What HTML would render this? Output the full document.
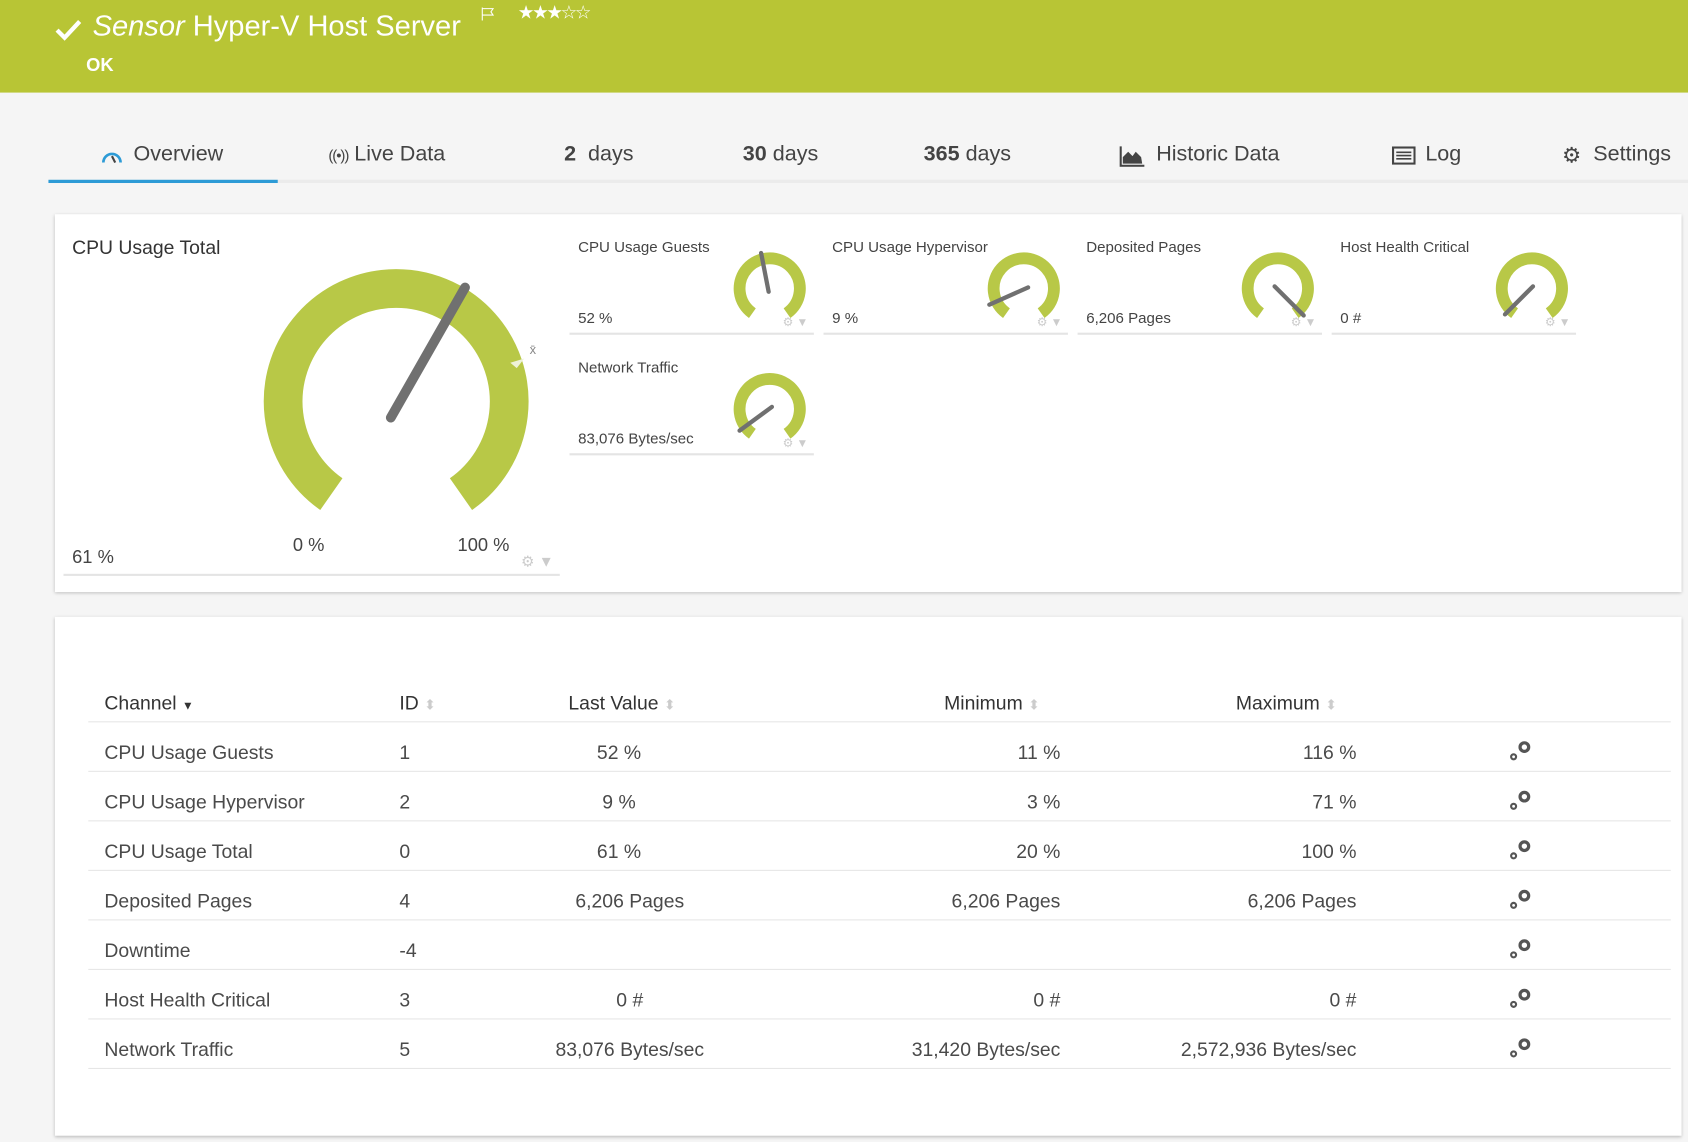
<!DOCTYPE html>
<html><head><meta charset="utf-8"><style>
html,body{margin:0;padding:0;width:1688px;height:1142px;overflow:hidden;background:#f5f5f5;font-family:"Liberation Sans",sans-serif;}
#w{position:absolute;left:0;top:0;width:1568px;height:1061px;transform:scale(1.07653);transform-origin:0 0;}
.a{position:absolute;white-space:nowrap;}
.hdr{position:absolute;left:0;top:0;width:1568px;height:86px;background:#b8c535;}
.tab{position:absolute;top:132px;font-size:20px;color:#444;}
.panel{position:absolute;background:#fff;box-shadow:0 1px 3px rgba(0,0,0,.25);}
.st{font-size:14px;color:#444;}
.sv{font-size:14px;color:#444;}
.ln{position:absolute;height:2px;background:#e4e4e4;}
.td{position:absolute;font-size:18px;color:#4a4a4a;}
.hl{position:absolute;left:82px;width:1470px;height:1px;background:#e6e6e6;}
.th{position:absolute;top:643px;font-size:18px;color:#333;}
.srt{display:inline-block;vertical-align:middle;margin-left:6px;}
</style></head><body><div id="w">
<div class="hdr"></div>
<svg class="a" style="left:50px;top:16px" width="28" height="24"><path d="M3 12 L10 19 L24 4" stroke="#fff" stroke-width="4" fill="none"/></svg>
<div class="a" style="left:86px;top:9px;font-size:27px;color:#fff;"><i>Sensor</i> Hyper-V Host Server</div>
<svg class="a" style="left:446px;top:6px" width="16" height="14"><path d="M2 1 V13 M2 2 H12 L10 5 L12 8 H2" stroke="#fff" stroke-width="1" fill="none"/></svg>
<div class="a" style="left:481px;top:2px;font-size:17px;color:#fff;letter-spacing:-2px;">★★★☆☆</div>
<div class="a" style="left:80px;top:51px;font-size:17px;color:#fff;font-weight:bold;">OK</div>

<div class="a" style="left:45px;top:167px;width:1523px;height:3px;background:#ebebeb"></div>
<div class="a" style="left:45px;top:167px;width:213px;height:3px;background:#2d9bd6"></div>
<svg class="a" style="left:93px;top:136px" width="22" height="18"><path d="M3 15 A8 8 0 1 1 19 15" stroke="#2d9bd6" stroke-width="2.5" fill="none"/><path d="M11 9 L14 15" stroke="#444" stroke-width="2"/></svg>
<div class="tab" style="left:124px;">Overview</div>
<div class="tab" style="left:305px;"><span style="font-size:14px;letter-spacing:-1px">((•))</span> Live Data</div>
<div class="tab" style="left:524px;"><b>2</b>&nbsp; days</div>
<div class="tab" style="left:690px;"><b>30</b> days</div>
<div class="tab" style="left:858px;"><b>365</b> days</div>
<svg class="a" style="left:1040px;top:135px" width="24" height="20"><path d="M1 1 V19 H23" stroke="#444" stroke-width="2" fill="none"/><path d="M3 17 L3 11 L8 6 L12 10 L15 6 L20 11 L21 17 Z" fill="#444"/></svg>
<div class="tab" style="left:1074px;">Historic Data</div>
<svg class="a" style="left:1293px;top:136px" width="22" height="17"><rect x="1" y="1" width="20" height="15" fill="none" stroke="#444" stroke-width="2"/><path d="M4 5.5H18M4 8.5H18M4 11.5H18" stroke="#444" stroke-width="1.5"/></svg>
<div class="tab" style="left:1324px;">Log</div>
<div class="tab" style="left:1451px;font-size:20px">⚙</div>
<div class="tab" style="left:1480px;">Settings</div>

<div class="panel" style="left:51px;top:199px;width:1511px;height:351px;"></div>
<div class="a" style="left:67px;top:220px;font-size:18px;color:#333;">CPU Usage Total</div>
<svg class="a" style="left:0;top:0" width="1568" height="560">
<path d="M307.8 459 A105 105 0 1 1 428.2 459" stroke="#b8c847" stroke-width="36" fill="none"/>
<path d="M474 337 L487 333 L480 342 Z" fill="#eef2d8"/>
<line x1="363" y1="388" x2="432" y2="267" stroke="#707070" stroke-width="9" stroke-linecap="round"/>
<g fill="none" stroke="#b8c847" stroke-width="11">
<path d="M698.9 290.9 A28 28 0 1 1 731.1 290.9"/>
<path d="M934.9 290.9 A28 28 0 1 1 967.1 290.9"/>
<path d="M1170.9 290.9 A28 28 0 1 1 1203.1 290.9"/>
<path d="M1406.9 290.9 A28 28 0 1 1 1439.1 290.9"/>
<path d="M698.9 402.9 A28 28 0 1 1 731.1 402.9"/>
</g>
<g stroke="#707070" stroke-width="4" stroke-linecap="round">
<line x1="707" y1="235" x2="714" y2="271"/>
<line x1="919" y1="283" x2="955" y2="267"/>
<line x1="1184" y1="266" x2="1211" y2="293"/>
<line x1="1398" y1="292" x2="1424" y2="266"/>
<line x1="687" y1="400" x2="717" y2="378"/>
</g>
</svg>
<div class="a" style="left:492px;top:318px;font-size:12px;color:#888">x̄</div>
<div class="a" style="left:272px;top:497px;font-size:17px;color:#444">0 %</div>
<div class="a" style="left:425px;top:497px;font-size:17px;color:#444">100 %</div>
<div class="a" style="left:67px;top:508px;font-size:17px;color:#444">61 %</div>
<div class="ln" style="left:59px;top:533px;width:461px"></div>
<div class="a" style="left:484px;top:513px;font-size:14px;color:#ccc">⚙ ▼</div>

<div class="a st" style="left:537px;top:221px">CPU Usage Guests</div><div class="a sv" style="left:537px;top:287px">52 %</div><div class="ln" style="left:529px;top:309px;width:227px"></div><div class="a" style="left:727px;top:293px;font-size:11px;color:#ccc">⚙ ▼</div>
<div class="a st" style="left:773px;top:221px">CPU Usage Hypervisor</div><div class="a sv" style="left:773px;top:287px">9 %</div><div class="ln" style="left:765px;top:309px;width:227px"></div><div class="a" style="left:963px;top:293px;font-size:11px;color:#ccc">⚙ ▼</div>
<div class="a st" style="left:1009px;top:221px">Deposited Pages</div><div class="a sv" style="left:1009px;top:287px">6,206 Pages</div><div class="ln" style="left:1001px;top:309px;width:227px"></div><div class="a" style="left:1199px;top:293px;font-size:11px;color:#ccc">⚙ ▼</div>
<div class="a st" style="left:1245px;top:221px">Host Health Critical</div><div class="a sv" style="left:1245px;top:287px">0 #</div><div class="ln" style="left:1237px;top:309px;width:227px"></div><div class="a" style="left:1435px;top:293px;font-size:11px;color:#ccc">⚙ ▼</div>
<div class="a st" style="left:537px;top:333px">Network Traffic</div><div class="a sv" style="left:537px;top:399px">83,076 Bytes/sec</div><div class="ln" style="left:529px;top:421px;width:227px"></div><div class="a" style="left:727px;top:405px;font-size:11px;color:#ccc">⚙ ▼</div>

<div class="panel" style="left:51px;top:573px;width:1511px;height:482px;"></div>
<div class="th" style="left:97px">Channel <span style="font-size:11px">▼</span></div>
<div class="th" style="left:371px">ID <span style="color:#ccc;font-size:13px">⬍</span></div>
<div class="th" style="left:528px">Last Value <span style="color:#ccc;font-size:13px">⬍</span></div>
<div class="th" style="left:877px">Minimum <span style="color:#ccc;font-size:13px">⬍</span></div>
<div class="th" style="left:1148px">Maximum <span style="color:#ccc;font-size:13px">⬍</span></div>
<div class="hl" style="top:670px"></div><div class="hl" style="top:716px"></div><div class="hl" style="top:762px"></div><div class="hl" style="top:808px"></div><div class="hl" style="top:854px"></div><div class="hl" style="top:900px"></div><div class="hl" style="top:946px"></div><div class="hl" style="top:992px"></div>

<div id="rows"></div>
<div class="td" style="left:97px;top:689px">CPU Usage Guests</div><div class="td" style="left:371px;top:689px">1</div><div class="td" style="left:475px;width:200px;text-align:center;top:689px">52 %</div><div class="td" style="left:685px;width:300px;text-align:right;top:689px">11 %</div><div class="td" style="left:960px;width:300px;text-align:right;top:689px">116 %</div>
<div class="td" style="left:97px;top:735px">CPU Usage Hypervisor</div><div class="td" style="left:371px;top:735px">2</div><div class="td" style="left:475px;width:200px;text-align:center;top:735px">9 %</div><div class="td" style="left:685px;width:300px;text-align:right;top:735px">3 %</div><div class="td" style="left:960px;width:300px;text-align:right;top:735px">71 %</div>
<div class="td" style="left:97px;top:781px">CPU Usage Total</div><div class="td" style="left:371px;top:781px">0</div><div class="td" style="left:475px;width:200px;text-align:center;top:781px">61 %</div><div class="td" style="left:685px;width:300px;text-align:right;top:781px">20 %</div><div class="td" style="left:960px;width:300px;text-align:right;top:781px">100 %</div>
<div class="td" style="left:97px;top:827px">Deposited Pages</div><div class="td" style="left:371px;top:827px">4</div><div class="td" style="left:475px;width:220px;text-align:center;top:827px">6,206 Pages</div><div class="td" style="left:685px;width:300px;text-align:right;top:827px">6,206 Pages</div><div class="td" style="left:960px;width:300px;text-align:right;top:827px">6,206 Pages</div>
<div class="td" style="left:97px;top:873px">Downtime</div><div class="td" style="left:371px;top:873px">-4</div>
<div class="td" style="left:97px;top:919px">Host Health Critical</div><div class="td" style="left:371px;top:919px">3</div><div class="td" style="left:475px;width:220px;text-align:center;top:919px">0 #</div><div class="td" style="left:685px;width:300px;text-align:right;top:919px">0 #</div><div class="td" style="left:960px;width:300px;text-align:right;top:919px">0 #</div>
<div class="td" style="left:97px;top:965px">Network Traffic</div><div class="td" style="left:371px;top:965px">5</div><div class="td" style="left:475px;width:220px;text-align:center;top:965px">83,076 Bytes/sec</div><div class="td" style="left:685px;width:300px;text-align:right;top:965px">31,420 Bytes/sec</div><div class="td" style="left:960px;width:300px;text-align:right;top:965px">2,572,936 Bytes/sec</div>

<svg class="a" style="left:1400px;top:686px" width="26" height="300">
<g fill="none" stroke="#555"><g id="c"><circle cx="16" cy="8" r="4" stroke-width="3"/><circle cx="6" cy="17" r="2.3" stroke-width="2"/></g>
<use href="#c" y="46"/><use href="#c" y="92"/><use href="#c" y="138"/><use href="#c" y="184"/><use href="#c" y="230"/><use href="#c" y="276"/></g>
</svg>
</div></body></html>
